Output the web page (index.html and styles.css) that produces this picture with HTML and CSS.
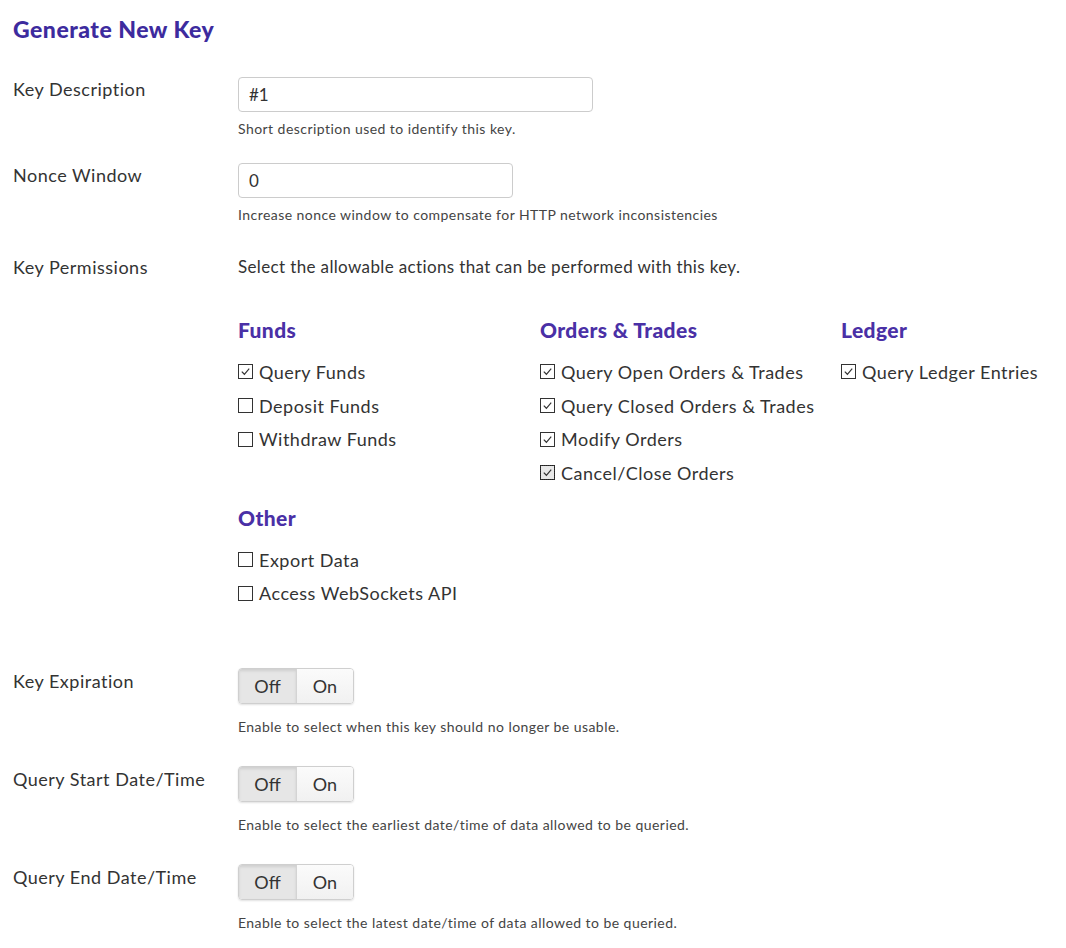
FILE: index.html
```html
<!DOCTYPE html>
<html lang="en">
<head>
<meta charset="utf-8">
<title>Generate New Key</title>
<link rel="stylesheet" href="styles.css">
</head>
<body>
<main class="page">
  <h1 class="title">Generate New Key</h1>

  <div class="row row-input">
    <div class="label">Key Description</div>
    <div class="field">
      <div class="input wide">#1</div>
      <div class="help">Short description used to identify this key.</div>
    </div>
  </div>

  <div class="row row-input">
    <div class="label">Nonce Window</div>
    <div class="field">
      <div class="input narrow">0</div>
      <div class="help">Increase nonce window to compensate for HTTP network inconsistencies</div>
    </div>
  </div>

  <div class="row row-perms">
    <div class="label">Key Permissions</div>
    <div class="field">
      <div class="intro">Select the allowable actions that can be performed with this key.</div>
      <div class="groups">
        <section class="group">
          <h2 class="group-title">Funds</h2>
          <div class="check"><span class="box on"><svg viewBox="0 0 14 14"><path d="M3 7.2 L5.8 10 L11 4"/></svg></span>Query Funds</div>
          <div class="check"><span class="box"></span>Deposit Funds</div>
          <div class="check"><span class="box"></span>Withdraw Funds</div>
        </section>
        <section class="group">
          <h2 class="group-title">Orders &amp; Trades</h2>
          <div class="check"><span class="box on"><svg viewBox="0 0 14 14"><path d="M3 7.2 L5.8 10 L11 4"/></svg></span>Query Open Orders &amp; Trades</div>
          <div class="check"><span class="box on"><svg viewBox="0 0 14 14"><path d="M3 7.2 L5.8 10 L11 4"/></svg></span>Query Closed Orders &amp; Trades</div>
          <div class="check"><span class="box on"><svg viewBox="0 0 14 14"><path d="M3 7.2 L5.8 10 L11 4"/></svg></span>Modify Orders</div>
          <div class="check"><span class="box on focus"><svg viewBox="0 0 14 14"><path d="M3 7.2 L5.8 10 L11 4"/></svg></span>Cancel/Close Orders</div>
        </section>
        <section class="group">
          <h2 class="group-title">Ledger</h2>
          <div class="check"><span class="box on"><svg viewBox="0 0 14 14"><path d="M3 7.2 L5.8 10 L11 4"/></svg></span>Query Ledger Entries</div>
        </section>
      </div>
      <section class="group other">
        <h2 class="group-title">Other</h2>
        <div class="check"><span class="box"></span>Export Data</div>
        <div class="check"><span class="box"></span>Access WebSockets API</div>
      </section>
    </div>
  </div>

  <div class="row row-toggle first-toggle">
    <div class="label">Key Expiration</div>
    <div class="field">
      <div class="toggle"><span class="seg off">Off</span><span class="seg onseg">On</span></div>
      <div class="help help-toggle">Enable to select when this key should no longer be usable.</div>
    </div>
  </div>

  <div class="row row-toggle">
    <div class="label">Query Start Date/Time</div>
    <div class="field">
      <div class="toggle"><span class="seg off">Off</span><span class="seg onseg">On</span></div>
      <div class="help help-toggle">Enable to select the earliest date/time of data allowed to be queried.</div>
    </div>
  </div>

  <div class="row row-toggle">
    <div class="label">Query End Date/Time</div>
    <div class="field">
      <div class="toggle"><span class="seg off">Off</span><span class="seg onseg">On</span></div>
      <div class="help help-toggle">Enable to select the latest date/time of data allowed to be queried.</div>
    </div>
  </div>
</main>
</body>
</html>
```

FILE: styles.css
```css
* { box-sizing: border-box; }

html, body {
  margin: 0;
  padding: 0;
  background: #ffffff;
}

body {
  font-family: Lato, "Open Sans", "Liberation Sans", sans-serif;
  color: #333333;
}

.page {
  padding: 15px 13px 0 13px;
}

.title {
  margin: 0;
  font-size: 23px;
  line-height: 28px;
  font-weight: 900;
  letter-spacing: 0.5px;
  color: #3d2b9e;
}

.row {
  display: flex;
  align-items: flex-start;
}

.row-input { margin-top: 25px; }
.row-input:first-of-type { margin-top: 34px; }

.label {
  width: 225px;
  flex: none;
  font-size: 18px;
  line-height: 24px;
  letter-spacing: 0.5px;
  color: #333333;
}

.field {
  flex: 1;
  min-width: 0;
}

.input {
  height: 35px;
  border: 1px solid #cccccc;
  border-radius: 4px;
  padding: 0 10px;
  font-size: 17px;
  line-height: 33px;
  color: #333333;
}

.input.wide { width: 355px; }
.input.narrow { width: 275px; }

.help {
  margin-top: 8px;
  font-size: 14px;
  line-height: 18px;
  letter-spacing: 0.45px;
  color: #444444;
}

.row-perms { margin-top: 31px; }

.intro {
  font-size: 17px;
  line-height: 24px;
  letter-spacing: 0.36px;
  color: #333333;
}

.groups {
  display: grid;
  grid-template-columns: 302px 301px 1fr;
  margin-top: 39px;
}

.group-title {
  margin: 0 0 13px 0;
  font-size: 21px;
  line-height: 24px;
  font-weight: 900;
  letter-spacing: 0.4px;
  color: #4a30a6;
}

.check {
  display: flex;
  align-items: center;
  height: 33.7px;
  font-size: 18px;
  letter-spacing: 0.5px;
  color: #333333;
  white-space: nowrap;
}

.box {
  width: 15px;
  height: 15px;
  flex: none;
  border: 1px solid #333333;
  margin-right: 6px;
  background: #ffffff;
  display: flex;
}

.box svg {
  width: 13px;
  height: 13px;
  fill: none;
  stroke: #333333;
  stroke-width: 1.3;
}

.box.focus {
  outline: 1px dotted #222222;
  outline-offset: -1px;
  background: #e8e8e8;
}

.group.other { margin-top: 16px; }

.row-toggle { margin-top: 30px; }
.row-toggle.first-toggle { margin-top: 58px; }

.row-toggle .label { padding-top: 1px; }

.toggle {
  display: inline-flex;
  height: 36px;
  border: 1px solid #cfcfcf;
  border-radius: 4px;
  overflow: hidden;
  box-shadow: 0 1px 2px rgba(0,0,0,0.12);
}

.seg {
  display: flex;
  align-items: center;
  justify-content: center;
  font-size: 18px;
  color: #333333;
}

.seg.off {
  width: 58px;
  background: #e6e6e6;
  box-shadow: inset 0 2px 3px rgba(0,0,0,0.1);
  border-right: 1px solid #d4d4d4;
}

.seg.onseg {
  width: 56px;
  background: linear-gradient(#fbfbfb, #f1f1f1);
}

.help-toggle { margin-top: 14px; }
```
